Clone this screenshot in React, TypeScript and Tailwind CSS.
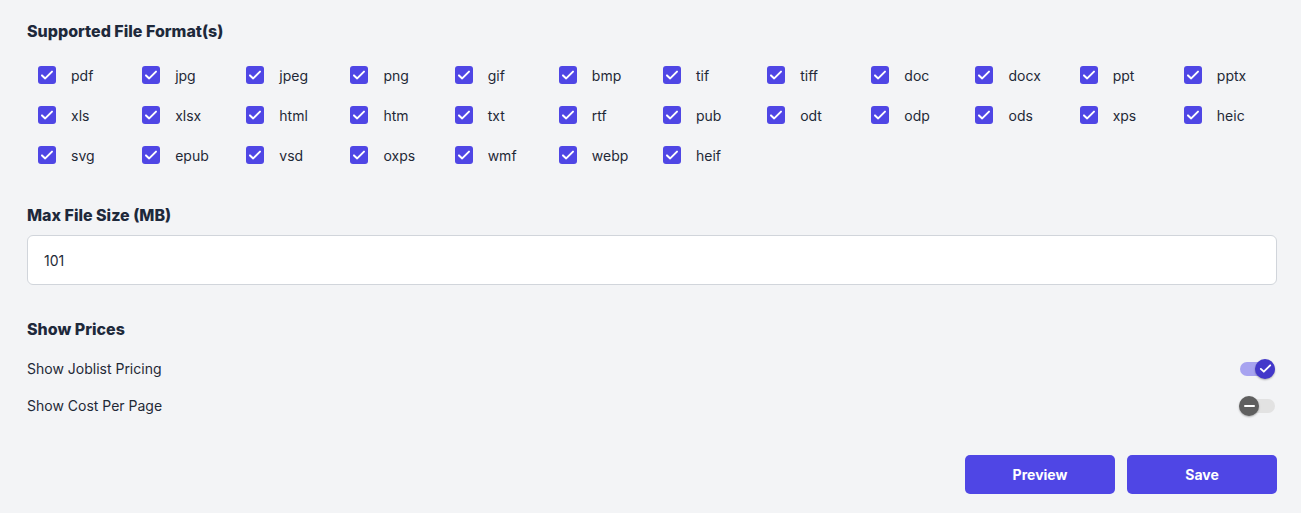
import React, { useState } from "react";

const FORMATS = [
    "pdf", "jpg", "jpeg", "png", "gif", "bmp", "tif", "tiff", "doc", "docx", "ppt", "pptx",
    "xls", "xlsx", "html", "htm", "txt", "rtf", "pub", "odt", "odp", "ods", "xps", "heic",
    "svg", "epub", "vsd", "oxps", "wmf", "webp", "heif",
];

const CheckIcon: React.FC<{ className?: string }> = ({ className }) => (
    <svg viewBox="0 0 16 16" className={className} fill="none" stroke="currentColor" strokeWidth={2} strokeLinecap="round" strokeLinejoin="round">
        <path d="M3 8.4l3.2 3 6.8-6.8" />
    </svg>
);

interface ToggleProps {
    on: boolean;
    onChange: () => void;
}

const Toggle: React.FC<ToggleProps> = ({ on, onChange }) => (
    <button type="button" onClick={onChange} className="relative w-[36px] h-[20px] mr-[2px] flex items-center">
        <span className="absolute left-[1px] right-0 h-[14px] rounded-full">
            <span className={`block w-full h-full rounded-full ${on ? "bg-[#a7a3f0]" : "bg-[#e2e2e2]"}`} />
        </span>
        <span
            className={`absolute top-0 w-[20px] h-[20px] rounded-full flex items-center justify-center shadow-[0_1px_2px_rgba(0,0,0,0.3)] ${
                on ? "left-[16px] bg-[#4338ca]" : "left-0 bg-[#5f5f5f]"
            }`}
        >
            {on ? (
                <CheckIcon className="w-[15px] h-[15px] text-white" />
            ) : (
                <span className="block w-[11px] h-[2px] rounded bg-white" />
            )}
        </span>
    </button>
);

const App: React.FC = () => {
    const [checked, setChecked] = useState<Record<string, boolean>>(
        Object.fromEntries(FORMATS.map((f) => [f, true]))
    );
    const [maxSize, setMaxSize] = useState("101");
    const [joblist, setJoblist] = useState(true);
    const [costPerPage, setCostPerPage] = useState(false);

    return (
        <div className="w-full min-h-[513px] bg-[#f3f4f6] pl-[27px] pr-[24px] pt-[19px] pb-[19px] text-[#1f2937] font-['Inter','Liberation_Sans',sans-serif]">
            {/* formats */}
            <h2 className="text-[16px] leading-[24px] font-extrabold text-[#1e293b]">Supported File Format(s)</h2>
            <div className="grid grid-cols-12 mt-[12px]">
                {FORMATS.map((f) => (
                    <label key={f} className="h-[40px] flex items-center pl-[11px] gap-[15px] cursor-pointer select-none">
                        <span
                            onClick={() => setChecked((p) => ({ ...p, [f]: !p[f] }))}
                            className={`w-[18px] h-[18px] shrink-0 rounded-[3px] flex items-center justify-center ${
                                checked[f] ? "bg-[#4f46e5]" : "bg-white border-2 border-gray-400"
                            }`}
                        >
                            {checked[f] && <CheckIcon className="w-[16px] h-[16px] text-white" />}
                        </span>
                        <span className="text-[14px] text-[#1f2937]">{f}</span>
                    </label>
                ))}
            </div>

            {/* max size */}
            <h2 className="mt-[28px] text-[16px] leading-[24px] font-extrabold text-[#1e293b]">Max File Size (MB)</h2>
            <input
                type="text"
                value={maxSize}
                onChange={(e) => setMaxSize(e.target.value.replace(/[^0-9]/g, ""))}
                className="mt-[8px] w-full h-[50px] px-[16px] bg-white border border-[#d1d5db] rounded-[6px] text-[14px] text-[#1f2937] focus:outline-none"
            />

            {/* prices */}
            <h2 className="mt-[32px] text-[16px] leading-[24px] font-extrabold text-[#1e293b]">Show Prices</h2>
            <div className="mt-[9px] flex flex-col">
                <div className="h-[37px] flex items-center justify-between">
                    <span className="text-[14px]">Show Joblist Pricing</span>
                    <Toggle on={joblist} onChange={() => setJoblist((v) => !v)} />
                </div>
                <div className="h-[37px] flex items-center justify-between">
                    <span className="text-[14px]">Show Cost Per Page</span>
                    <Toggle on={costPerPage} onChange={() => setCostPerPage((v) => !v)} />
                </div>
            </div>

            <div className="mt-[31px] flex justify-end gap-[12px]">
                <button className="w-[150px] h-[39px] rounded-[5px] bg-[#4f46e5] text-white text-[14px] font-bold">Preview</button>
                <button className="w-[150px] h-[39px] rounded-[5px] bg-[#4f46e5] text-white text-[14px] font-bold">Save</button>
            </div>
        </div>
    );
};

export default App;
